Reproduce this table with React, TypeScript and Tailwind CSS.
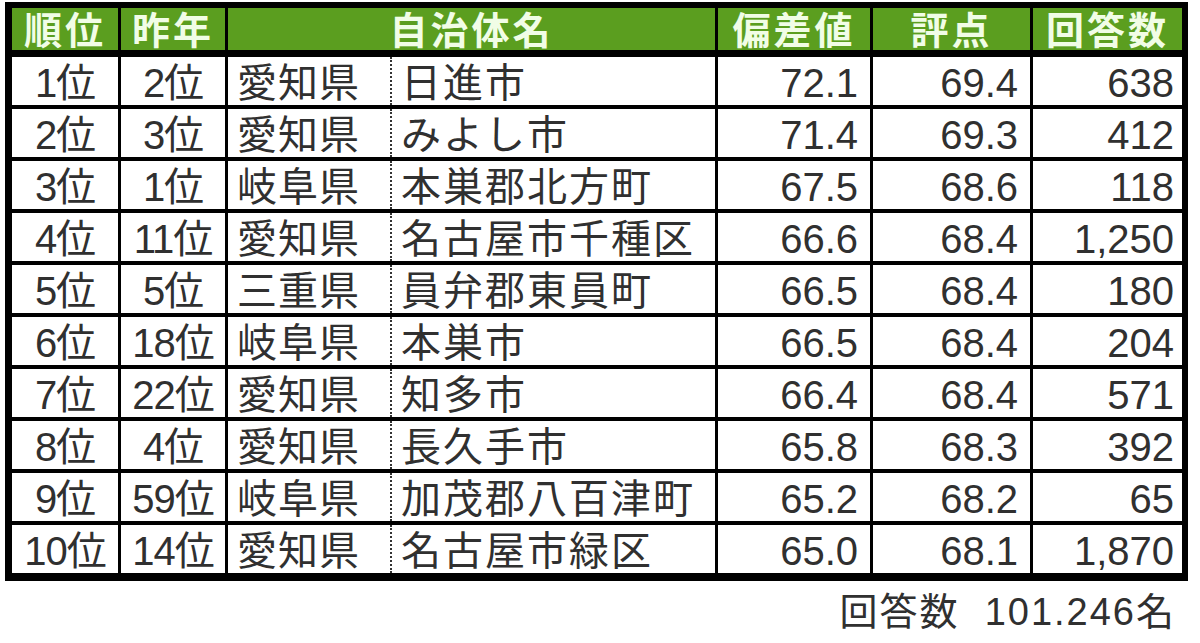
import React from "react";

const rows: string[][] = [
  ["1位", "2位", "愛知県", "日進市", "72.1", "69.4", "638"],
  ["2位", "3位", "愛知県", "みよし市", "71.4", "69.3", "412"],
  ["3位", "1位", "岐阜県", "本巣郡北方町", "67.5", "68.6", "118"],
  ["4位", "11位", "愛知県", "名古屋市千種区", "66.6", "68.4", "1,250"],
  ["5位", "5位", "三重県", "員弁郡東員町", "66.5", "68.4", "180"],
  ["6位", "18位", "岐阜県", "本巣市", "66.5", "68.4", "204"],
  ["7位", "22位", "愛知県", "知多市", "66.4", "68.4", "571"],
  ["8位", "4位", "愛知県", "長久手市", "65.8", "68.3", "392"],
  ["9位", "59位", "岐阜県", "加茂郡八百津町", "65.2", "68.2", "65"],
  ["10位", "14位", "愛知県", "名古屋市緑区", "65.0", "68.1", "1,870"],
];

const font = { fontFamily: '"Liberation Sans", "Noto Sans CJK JP", sans-serif' };

export default function App() {
  return (
    <div className="w-[1200px] h-[643px] bg-white overflow-hidden" style={font}>
      <div className="ml-[5px] mt-[2px] w-[1183px] bg-black pt-[6px] pl-[7px] pr-[6px] pb-[8px]">
        <div className="grid grid-cols-[106px_104px_487px_152px_157px_149px] gap-x-[3px] h-[42px] text-[38px] leading-[38px] font-bold text-[#f1fde6]">
          {["順位", "昨年", "自治体名", "偏差値", "評点", "回答数"].map((h) => (
            <div key={h} className="bg-[#5b9e1f] h-[42px] flex items-center justify-center tracking-[3px] pt-[3px]">
              <span>{h}</span>
            </div>
          ))}
        </div>
        <div className="mt-[7px] flex flex-col gap-y-[4px]">
          {rows.map((r, i) => (
            <div
              key={i}
              className="grid grid-cols-[106px_104px_487px_152px_157px_149px] gap-x-[3px] h-[48px] text-[40px] leading-[44px] text-[#303030]"
            >
              <div className="bg-white h-[48px] text-center tracking-[-1px] pt-[4px]">{r[0]}</div>
              <div className="bg-white h-[48px] text-center tracking-[-1px] pt-[4px]">{r[1]}</div>
              <div className="bg-white h-[48px] flex">
                <div className="w-[162px] pl-[9px] pt-[4px] tracking-[1px]">{r[2]}</div>
                <div className="flex-1 border-l-2 border-dotted border-[#333] pl-[9px] pt-[4px] tracking-[2px]">{r[3]}</div>
              </div>
              <div className="bg-white h-[48px] text-right pr-[12px] pt-[4px]">{r[4]}</div>
              <div className="bg-white h-[48px] text-right pr-[12px] pt-[4px]">{r[5]}</div>
              <div className="bg-white h-[48px] text-right pr-[8px] pt-[4px]">{r[6]}</div>
            </div>
          ))}
        </div>
      </div>
      <div className="w-[1176px] text-right text-[38px] leading-[40px] mt-[11px] text-[#303030] tracking-[2px]">
        回答数&nbsp;&nbsp;101.246名
      </div>
    </div>
  );
}
